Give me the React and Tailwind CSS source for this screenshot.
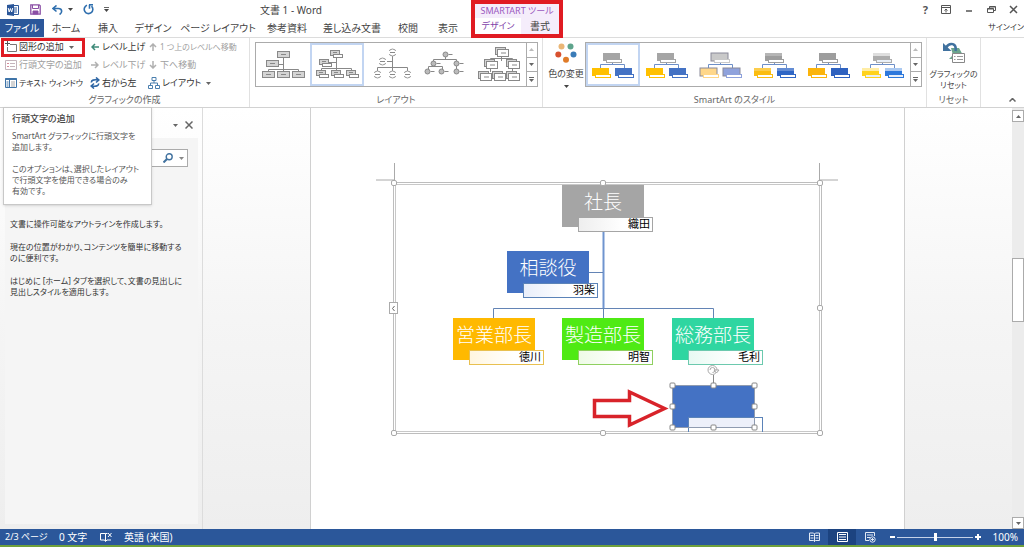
import { useState } from "react";
import clsx from "clsx";

const TABS = [
  { label: "ホーム", width: "w-[44px]" },
  { label: "挿入", width: "w-[40px]" },
  { label: "デザイン", width: "w-[50px]" },
  { label: "ページ レイアウト", width: "w-[80px]" },
  { label: "参考資料", width: "w-[58px]" },
  { label: "差し込み文書", width: "w-[72px]" },
  { label: "校閲", width: "w-[40px]" },
  { label: "表示", width: "w-[40px]" },
];

const NODES = [
  { title: "社長", name: "織田", pos: "left-[169px] top-[3px]", fill: "bg-[#a5a5a5]", line: "border-[#a5a5a5]", tint: "from-[#eeeeee]" },
  { title: "相談役", name: "羽柴", pos: "left-[114px] top-[69px]", fill: "bg-[#4472c4]", line: "border-[#5b83b8]", tint: "from-[#e9eefa]" },
  { title: "営業部長", name: "徳川", pos: "left-[60px] top-[136px]", fill: "bg-[#ffb900]", line: "border-[#e8c050]", tint: "from-[#fff6e0]" },
  { title: "製造部長", name: "明智", pos: "left-[169px] top-[136px]", fill: "bg-[#4fea14]", line: "border-[#8fd060]", tint: "from-[#eefbe6]" },
  { title: "総務部長", name: "毛利", pos: "left-[279px] top-[136px]", fill: "bg-[#2fd6a1]", line: "border-[#6cc9ae]", tint: "from-[#e8faf3]" },
];

const STYLES = [
  { top: "#a5a5a5", left: "#ffc000", right: "#4472c4" },
  { top: "#a5a5a5", left: "#ffc000", right: "#4472c4" },
  { top: "#c9c9c9", left: "#ffd78a", right: "#8fa2dc", outline: true },
  { top: "#9d9d9d", left: "#fbbd10", right: "#2f66c6", gloss: true },
  { top: "#9d9d9d", left: "#fbb40c", right: "#2f62c0" },
  { top: "#adadad", left: "#ffd21e", right: "#2d78dc", gloss: true, shine: true },
];

function Caret({ className }) {
  return (
    <svg className={clsx("h-[3px] w-[5px] shrink-0", className)} viewBox="0 0 5 3" fill="currentColor">
      <path d="M0 0h5L2.5 3z" />
    </svg>
  );
}

/* ---------- ribbon icons ---------- */

function AddShapeIcon() {
  return (
    <svg className="h-3 w-3 shrink-0" viewBox="0 0 12 12" fill="none" stroke="#777">
      <path d="M5 3.5h6.5v7h-9V6" />
      <path d="M2.5 0v5M0 2.5h5" stroke="#555" />
    </svg>
  );
}

function BulletIcon() {
  return (
    <svg className="h-3 w-3 shrink-0" viewBox="0 0 12 12" fill="none" stroke="#c4b4bc">
      <path d="M.5 1.5h11v9H.5z" />
      <path d="M2 4.5h2M2 7.5h2" stroke="#d58a9a" />
      <path d="M5 4.5h5M5 7.5h5" />
    </svg>
  );
}

function TextPaneIcon() {
  return (
    <svg className="h-3 w-3 shrink-0" viewBox="0 0 12 12" fill="none" stroke="#3f74a8">
      <path d="M.5 1.5h11v9H.5zM4.5 2v8" />
      <path d="M.5 2h11" strokeWidth="2" />
      <path d="M1.5 5h2M1.5 7h2M1.5 9h2" />
      <path d="M6 5h4M6 7h4M6 9h4" stroke="#aaa" />
    </svg>
  );
}

function Arrow({ dir, color }) {
  const paths = {
    left: "M8 4H1M4 1L1 4l3 3",
    right: "M0 4h7M4 1l3 3-3 3",
    up: "M4 8V1M1 4l3-3 3 3",
    down: "M4 0v7M1 4l3 3 3-3",
  };
  return (
    <svg className="mx-px h-2 w-2 shrink-0" viewBox="0 0 8 8" fill="none" stroke={color} strokeWidth="1.5">
      <path d={paths[dir]} />
    </svg>
  );
}

function SwapIcon() {
  return (
    <svg className="h-3 w-[10px] shrink-0" viewBox="0 0 10 12" fill="none" stroke="#2f67a5" strokeWidth="1.6">
      <path d="M1.500 5.500C1 3 4 2.500 8 3M6 .5L8.800 3 6 5.500" />
      <path d="M8.500 6.500C9 9 6 9.500 2 9M4 6.500L1.200 9 4 11.500" />
    </svg>
  );
}

function TreeIcon() {
  return (
    <svg className="h-3 w-3 shrink-0" viewBox="0 0 12 12" fill="none" stroke="#4a7fae">
      <path d="M4 .5h4v3H4zM.5 8.500h4v3h-4zM7.500 8.500h4v3h-4zM6 4v2M2.500 8V6h7v2" />
    </svg>
  );
}

function ColorDots() {
  return (
    <svg className="h-5 w-[22px]" viewBox="0 0 22 20">
      <circle cx="6.500" cy="3.500" r="3" fill="#eab676" />
      <circle cx="15.500" cy="3.500" r="3" fill="#5ea48c" />
      <circle cx="3.300" cy="11.500" r="3" fill="#d8512f" />
      <circle cx="18.500" cy="11.500" r="3" fill="#3a7cb8" />
      <circle cx="11" cy="16.800" r="3" fill="#e07b28" />
    </svg>
  );
}

function ResetIcon() {
  return (
    <svg className="h-[22px] w-6" viewBox="0 0 24 22" fill="none">
      <path d="M9 6h8l5 9v2H7l4-4z" fill="#6ba58d" />
      <path d="M10.500 11.500h12v9h-12z" fill="#fff" stroke="#888" />
      <path d="M12 14.500h1.500M12 17.500h1.500M15 14.500h6M15 17.500h6" stroke="#999" />
      <path d="M4 5.500C8-.5 15 1.500 13.500 9" stroke="#41729f" strokeWidth="2.500" />
      <path d="M1 1v8h8.500z" fill="#41729f" />
    </svg>
  );
}

/* ---------- gallery thumbnails ---------- */

function LayoutThumb({ kind }) {
  const box = { fill: "#d4d4d4", stroke: "#888" };
  return (
    <svg className="h-9 w-11" viewBox="0 0 44 36" fill="none" stroke="#888">
      {kind === 0 && (
        <>
          <path d="M22.500 10v15M16 17.500h6M7.500 27v-4.500h30V27" />
          {[[16, 4], [5, 13], [1, 24], [16, 24], [31, 24]].map(([x, y]) => (
            <g key={x + "-" + y}>
              <rect x={x + 0.5} y={y + 0.5} width="12" height="6" {...box} />
              <path d={`M${x + 4} ${y + 3.5}h5`} />
            </g>
          ))}
        </>
      )}
      {kind === 1 && (
        <>
          <path d="M21.500 9v14M14 15.500h8M6.500 25v-3.500h30V25" />
          {[[15, 3], [4, 12], [1, 23], [16, 23], [31, 23]].map(([x, y]) => (
            <g key={x + "-" + y}>
              <rect x={x + 0.5} y={y + 0.5} width="9" height="5" {...box} />
              <rect x={x + 3.5} y={y + 4.5} width="9" height="3" fill="#fff" />
              <path d={`M${x + 3} ${y + 2.5}h4`} />
            </g>
          ))}
        </>
      )}
      {kind === 2 && (
        <>
          <path d="M23.500 9v15M17 14.500h6M8.500 24v-3.500h30V24" />
          {[[23.5, 5.5], [13.5, 14.5], [8.5, 27.5], [23.5, 27.5], [38.5, 27.5]].map(([x, y]) => (
            <g key={x + "-" + y}>
              <circle cx={x} cy={y} r="3.500" fill="#fff" stroke="#999" />
              <path d={`M${x - 4.5} ${y}h9`} stroke="#fff" strokeWidth="3" />
              <path d={`M${x - 2.5} ${y}h5`} />
            </g>
          ))}
        </>
      )}
      {kind === 3 && (
        <>
          <path d="M22.500 9v4M10.500 16v-3.500h23V16M5.500 23v-3.500h14V23M33.500 18v4" />
          {[[22.5, 7.5], [10.5, 16.5], [33.5, 16.5], [4.5, 24.5], [18.5, 24.5], [33.5, 24.5]].map(([x, y]) => (
            <g key={x + "-" + y}>
              <circle cx={x} cy={y} r="2.500" fill="#bbb" />
              <path d={`M${x + 3} ${y}h4`} />
            </g>
          ))}
        </>
      )}
      {kind === 4 && (
        <>
          <path d="M24.500 9v5M13.500 14v-2.500h22V14M13.500 21v4M35.500 21v4" />
          {[[18, 0], [7, 12], [29, 12], [1, 24], [15, 24], [29, 24]].map(([x, y]) => (
            <g key={x + "-" + y}>
              <rect x={x + 0.5} y={y + 0.5} width="10" height="7" {...box} />
              <rect x={x + 2.5} y={y + 2.5} width="11" height="7" fill="#fff" />
              <path d={`M${x + 6} ${y + 6}h5`} />
            </g>
          ))}
        </>
      )}
    </svg>
  );
}

function StyleThumb({ top, left, right, outline, gloss, shine }) {
  const edge = outline ? "#8a8a9a" : "none";
  const parts = [
    { x: 12, y: 2, color: top },
    { x: 1, y: 17, color: left },
    { x: 24, y: 17, color: right },
  ];
  return (
    <svg className="h-7 w-11" viewBox="0 0 44 28">
      <path d="M21.500 11v3M9.500 17v-3.500h24v3.500" fill="none" stroke="#6d8fc8" />
      {parts.map(p => (
        <g key={p.x}>
          <rect x={p.x} y={p.y} width="17" height="8" fill={p.color} stroke={edge} />
          {gloss && <rect x={p.x} y={p.y} width="17" height="3" fill="#fff" opacity={shine ? 0.6 : 0.25} />}
          <rect x={p.x + 3.5} y={p.y + 6.5} width="15" height="3" fill={shine ? "#e8eff8" : "#fff"} stroke={p.color} />
        </g>
      ))}
    </svg>
  );
}

function Gallery({ label, count, selected, itemWidth, renderItem }) {
  return (
    <div className="flex h-[45px] border border-[#ababab] bg-white" role="group" aria-label={label}>
      {Array.from({ length: count }, (_, i) => (
        <button
          key={i}
          aria-label={`${label} ${i + 1}`}
          className={clsx(
            "flex items-center justify-center border-2",
            itemWidth,
            i === selected ? "border-[#c2d5f2]" : "border-transparent"
          )}
        >
          {renderItem(i)}
        </button>
      ))}
      <div className="flex w-[11px] flex-col divide-y divide-[#ababab] border-l border-[#ababab] text-[#666]">
        <button aria-label="上へ" className="flex flex-1 items-center justify-center text-[#bbb]">
          <Caret className="rotate-180" />
        </button>
        <button aria-label="下へ" className="flex flex-1 items-center justify-center">
          <Caret />
        </button>
        <button aria-label="その他" className="flex flex-1 flex-col items-center justify-center gap-px">
          <span className="h-px w-[5px] bg-[#666]" />
          <Caret />
        </button>
      </div>
    </div>
  );
}

function Group({ label, className, children }) {
  return (
    <section className={clsx("flex flex-col border-r border-[#e1e1e1]", className)}>
      <div className="flex h-[55px] justify-center">{children}</div>
      <p className="text-center text-[9px] leading-[14px] text-[#666]">{label}</p>
    </section>
  );
}

function RibbonButton({ icon, label, disabled, caret, highlight, compact }) {
  return (
    <button
      disabled={disabled}
      className={clsx("relative flex h-[18px] items-center gap-[2px]", disabled ? "text-[#a0a0a0]" : "text-[#333]")}
    >
      {icon}
      <span className={clsx(compact && "text-[8px]")}>{label}</span>
      {caret && <Caret className="ml-[3px] text-[#666]" />}
      {highlight && <span className="absolute -left-1 top-0 h-[19px] w-[84px] border-[3px] border-[#e01b22]" />}
    </button>
  );
}

/* ---------- window parts ---------- */

function TitleBar() {
  return (
    <header className="flex h-[38px] text-[10px] leading-4 text-[#444]">
      <div className="flex w-[471px] shrink-0 flex-col border-b border-[#dcdcdc]">
        <div className="flex h-[19px] items-center">
          <div className="flex w-[260px] items-center pl-[7px]">
            <svg className="h-3 w-3" viewBox="0 0 12 12">
              <path d="M5 1.500h6.500v9H5" fill="#fff" stroke="#2b579a" />
              <path d="M7 4h3M7 6h3M7 8h3" stroke="#2b579a" />
              <path d="M0 1l7-1v12l-7-1z" fill="#2b579a" />
              <path d="M1.200 4l1 4 1.200-3.500L4.700 8l1-4" fill="none" stroke="#fff" />
            </svg>
            <svg className="ml-[11px] h-[11px] w-[11px]" viewBox="0 0 11 11" fill="none" stroke="#8a4fa5">
              <path d="M.8.8h8.400l1 1v8.400H.8z" strokeWidth="1.300" />
              <path d="M2.500 1v3.500h6V1" />
              <path d="M3 7h5v3H3z" fill="#8a4fa5" />
            </svg>
            <svg className="ml-[11px] h-[10px] w-[11px]" viewBox="0 0 11 10" fill="none" stroke="#2f6fae" strokeWidth="1.600">
              <path d="M4.500.5L1 3.500l3.500 3M1 3.500h5.500c4 0 4 4.500 1 6" />
            </svg>
            <Caret className="ml-[5px]" />
            <svg className="ml-[10px] h-[11px] w-[11px]" viewBox="0 0 11 11" fill="none" stroke="#2f6fae" strokeWidth="1.600">
              <path d="M4 1.300A4.300 4.300 0 1 0 8.500 2.200M6 .800h4M6.500.8v4" />
            </svg>
            <span className="ml-[10px] flex flex-col items-center gap-px">
              <span className="h-px w-[5px] bg-[#666]" />
              <Caret />
            </span>
          </div>
          <h1>文書 1 - Word</h1>
        </div>
        <nav className="flex h-[18px] items-center whitespace-nowrap">
          <button className="h-[18px] w-[44px] bg-[#2b579a] text-white">ファイル</button>
          {TABS.map(t => (
            <button key={t.label} className={clsx("text-center", t.width)}>
              {t.label}
            </button>
          ))}
        </nav>
      </div>

      <div className="flex w-[92px] shrink-0 flex-col whitespace-nowrap border-4 border-[#e01b22] bg-[#f5edfb]">
        <p className="text-center text-[9px] leading-[14px] text-[#9b59c0]">SMARTART ツール</p>
        <div className="flex h-[16px]">
          <button className="w-[46px] bg-white text-[9px] text-[#8040a8]">デザイン</button>
          <button className="flex-1">書式</button>
        </div>
      </div>

      <div className="flex min-w-0 flex-1 flex-col items-end border-b border-[#dcdcdc]">
        <div className="flex h-[19px] items-center gap-[13px] pr-[6px] text-[#555]">
          <button aria-label="ヘルプ" className="text-[11px] font-bold">?</button>
          <button aria-label="リボンの表示オプション">
            <svg className="h-[9px] w-[10px]" viewBox="0 0 10 9" fill="none" stroke="currentColor">
              <path d="M.5.5h9v8h-9zM.5 2.500h9M5 7.500V4M3.500 5.500L5 4l1.500 1.500" />
            </svg>
          </button>
          <button aria-label="最小化">
            <svg className="h-[9px] w-[10px]" viewBox="0 0 10 9" stroke="currentColor" strokeWidth="1.500"><path d="M2 6h6" /></svg>
          </button>
          <button aria-label="元に戻す">
            <svg className="h-[9px] w-[9px]" viewBox="0 0 9 9" fill="none" stroke="currentColor">
              <path d="M.5 3.500h6v4h-6zM2.500 3.500v-2h6v4h-2M2.500 2h6M.5 4h6" />
            </svg>
          </button>
          <button aria-label="閉じる">
            <svg className="h-[9px] w-[9px]" viewBox="0 0 9 9" stroke="currentColor" strokeWidth="1.500"><path d="M1 1l7 7M8 1L1 8" /></svg>
          </button>
        </div>
        <a href="#signin" className="text-[8px] text-[#333]">サインイン</a>
      </div>
    </header>
  );
}

function Ribbon() {
  return (
    <div className="flex h-[70px] border-b border-[#d2d2d2] whitespace-nowrap">
      <Group label="グラフィックの作成" className="w-[250px] shrink-0">
        <div className="flex w-full pl-[5px] text-[9px] leading-3">
          <div className="w-[83px]">
            <RibbonButton icon={<AddShapeIcon />} label="図形の追加" caret highlight />
            <RibbonButton icon={<BulletIcon />} label="行頭文字の追加" disabled />
            <RibbonButton icon={<TextPaneIcon />} label="テキスト ウィンドウ" compact />
          </div>
          <div className="w-[60px] pl-[2px]">
            <RibbonButton icon={<Arrow dir="left" color="#3d8a78" />} label="レベル上げ" />
            <RibbonButton icon={<Arrow dir="right" color="#b0b0b0" />} label="レベル下げ" disabled />
            <RibbonButton icon={<SwapIcon />} label="右から左" />
          </div>
          <div>
            <RibbonButton icon={<Arrow dir="up" color="#b0b0b0" />} label="1 つ上のレベルへ移動" disabled compact />
            <RibbonButton icon={<Arrow dir="down" color="#b0b0b0" />} label="下へ移動" disabled />
            <RibbonButton icon={<TreeIcon />} label="レイアウト" caret />
          </div>
        </div>
      </Group>

      <Group label="レイアウト" className="w-[293px] shrink-0">
        <div className="pt-1">
          <Gallery
            label="レイアウト"
            count={5}
            selected={1}
            itemWidth="w-[54px]"
            renderItem={i => <LayoutThumb kind={i} />}
          />
        </div>
      </Group>

      <Group label="SmartArt のスタイル" className="w-[384px] shrink-0">
        <button className="flex w-[37px] flex-col items-center pt-[5px] text-[9px] leading-[14px] text-[#444]">
          <ColorDots />
          <span className="mt-1">色の変更</span>
          <Caret className="mt-1" />
        </button>
        <div className="pt-1">
          <Gallery
            label="スタイル"
            count={6}
            selected={0}
            itemWidth="w-[54px]"
            renderItem={i => <StyleThumb {...STYLES[i]} />}
          />
        </div>
      </Group>

      <Group label="リセット" className="w-[54px] shrink-0">
        <button className="flex flex-col items-center pt-1 text-[8px] leading-[11px] text-[#444]">
          <ResetIcon />
          <span className="mt-1">グラフィックの</span>
          <span>リセット</span>
        </button>
      </Group>

      <button aria-label="リボンを折りたたむ" className="mt-auto mr-2 mb-[5px] ml-auto">
        <svg className="h-1 w-[7px]" viewBox="0 0 7 4" fill="none" stroke="#666" strokeWidth="1.500"><path d="M.5 3.500l3-3 3 3" /></svg>
      </button>
    </div>
  );
}

function NavigationPane() {
  const [query, setQuery] = useState("");

  return (
    <aside className="relative w-[203px] shrink-0 border-r border-[#dcdcdc] whitespace-nowrap">
      <div className="flex h-[30px] items-center justify-end gap-[6px] pt-1 pr-[9px] text-[#666]">
        <button aria-label="作業ウィンドウのオプション"><Caret className="w-[7px]" /></button>
        <button aria-label="閉じる">
          <svg className="h-2 w-2" viewBox="0 0 8 8" stroke="currentColor" strokeWidth="1.500"><path d="M.5.5l7 7M7.500.5l-7 7" /></svg>
        </button>
      </div>

      <div className="mr-1 ml-[5px] h-[386px] bg-[#f5f5f5] px-[5px] pt-[11px]">
        <div className="flex h-[18px] w-[178px] items-center gap-[6px] border border-[#ababab] bg-white pr-[3px]">
          <input
            aria-label="文書の検索"
            value={query}
            onChange={e => setQuery(e.target.value)}
            className="h-4 min-w-0 flex-1 px-1 text-[9px] outline-none"
          />
          <svg className="h-[10px] w-[10px]" viewBox="0 0 10 10" fill="none" stroke="#41729f" strokeWidth="1.400">
            <circle cx="6.200" cy="3.800" r="3" />
            <path d="M4 6L.5 9.500" strokeWidth="2" />
          </svg>
          <Caret className="text-[#888]" />
        </div>

        <div className="space-y-3 pt-[51px] text-[8px] leading-[11px] text-[#333]">
          <p>文書に操作可能なアウトラインを作成します。</p>
          <p>現在の位置がわかり、コンテンツを簡単に移動する<br />のに便利です。</p>
          <p>はじめに [ホーム] タブを選択して、文書の見出しに<br />見出しスタイルを適用します。</p>
        </div>
      </div>

      <div role="tooltip" className="absolute -top-px left-[3px] h-[98px] w-[149px] border border-[#c8c8c8] bg-white pt-1 pl-2 text-[8px] leading-[11px] text-[#555] shadow-sm">
        <p className="pb-1 text-[9px] leading-[14px] font-medium text-[#444]">行頭文字の追加</p>
        <p>SmartArt グラフィックに行頭文字を<br />追加します。</p>
        <p className="pt-[11px]">このオプションは、選択したレイアウト<br />で行頭文字を使用できる場合のみ<br />有効です。</p>
      </div>
    </aside>
  );
}

function OrgNode({ title, name, pos, fill, line, tint }) {
  return (
    <div className={clsx("absolute h-[42px] w-[82px] text-center text-[19px] leading-[34px] font-light text-white", pos, fill)}>
      {title}
      <div className={clsx("absolute top-8 left-4 h-[15px] w-[75px] border bg-white bg-linear-to-r to-60% to-white pr-[2px] text-right text-[11px] leading-3 font-normal text-black", line, tint)}>
        {name}
      </div>
    </div>
  );
}

function SmartArt() {
  const corner = [[1, 1], [210, 1], [427, 1], [427, 126], [1, 251], [210, 251], [427, 251]];
  const grips = [[279, 203], [320, 203], [361, 203], [279, 224], [361, 224], [279, 245], [320, 245], [361, 245]];

  return (
    <div className="relative mx-auto mt-[74px] h-[253px] w-[429px]">
      {/* connectors, crop marks and canvas frame */}
      <svg className="absolute inset-0 h-full w-full overflow-visible" viewBox="0 0 429 253" fill="none">
        <path d="M1.500-19V-2H-17M426.500-19V-2H445" stroke="#aaa" />
        <rect x=".5" y=".5" width="428" height="251" stroke="#bdbdbd" />
        <rect x="2.500" y="2.500" width="424" height="247" stroke="#c8c8c8" />
        <path d="M210.500 48v78" stroke="#6f94cf" strokeWidth="2" />
        <path d="M196 90.500h14M210.500 126v10M100.500 136v-9.500h220v9.500" stroke="#6384b5" />
      </svg>

      {NODES.map(n => (
        <OrgNode key={n.title} {...n} />
      ))}

      {/* shape that has just been added */}
      <div className="absolute top-[203px] left-[279px] h-[42px] w-[82px] bg-[#4472c4]">
        <div className="absolute top-8 left-4 h-[15px] w-[75px] border border-b-0 border-[#5b83b8]">
          <div className="h-[10px] w-[66px] bg-[#edf0fa]" />
        </div>
      </div>

      {/* handles */}
      <svg className="absolute inset-0 h-full w-full overflow-visible" viewBox="0 0 429 253" fill="#fff" stroke="#a9a9a9">
        {corner.map(([x, y]) => (
          <rect key={x + "-" + y} x={x - 2.5} y={y - 2.5} width="5" height="5" rx="1.500" />
        ))}
        <rect x="279.500" y="203.500" width="82" height="42" fill="none" stroke="#8f9bb0" />
        <path d="M320.500 193v10" stroke="#888" />
        <circle cx="319.500" cy="188" r="4.500" />
        <path d="M317 188a2.500 2.500 0 1 1 2.500 2.500M321 188h5l-2.500 3z" />
        {grips.map(([x, y]) => (
          <rect key={x + "-" + y} x={x - 2} y={y - 2} width="5" height="5" rx="1" stroke="#888" />
        ))}
        <path
          d="M201.500 218.500h35v-8.500l35 16.500-35 16.500v-8.500h-35z"
          stroke="#d8232a"
          strokeWidth="3.500"
        />
      </svg>

      <button aria-label="テキスト ウィンドウを開く" className="absolute top-[120px] -left-1 flex h-3 w-[9px] items-center justify-center border border-[#ababab] bg-white">
        <svg className="h-[5px] w-[3px]" viewBox="0 0 3 5" fill="none" stroke="#666"><path d="M2.500 0L.5 2.500l2 2.500" /></svg>
      </button>
    </div>
  );
}

function ScrollBar() {
  return (
    <div className="flex w-3 shrink-0 flex-col bg-[#ececec] pt-[2px] text-[#666]">
      <button aria-label="上にスクロール" className="flex h-3 items-center justify-center border border-[#ababab] bg-white">
        <Caret className="rotate-180" />
      </button>
      <div className="mt-[136px] h-16 border border-[#ababab] bg-white" />
      <button aria-label="下にスクロール" className="mt-auto flex h-3 items-center justify-center border border-[#ababab] bg-white">
        <Caret />
      </button>
    </div>
  );
}

function StatusBar() {
  const [zoom, setZoom] = useState(100);

  return (
    <footer className="flex h-[18px] items-center border-b-2 border-[#6fa03c] bg-[#2b579a] pr-[6px] pl-[5px] text-[10px] leading-4 whitespace-nowrap text-white">
      <span className="w-[54px] text-[9px]">2/3 ページ</span>
      <span className="w-[41px]">0 文字</span>
      <svg className="mr-3 h-[10px] w-3" viewBox="0 0 12 10" fill="none" stroke="#fff">
        <path d="M5.500 9V1.500H.5V8h4l1 1.500L7 8h4M5.500 1.500h2M8 1l3.500 4M11.500 1L8 5" />
      </svg>
      <span>英語 (米国)</span>

      <div className="ml-auto flex items-center">
        <button aria-label="閲覧モード" className="flex h-4 w-7 items-center justify-center">
          <svg className="h-[10px] w-[11px]" viewBox="0 0 11 10" fill="none" stroke="#e3eaf5">
            <path d="M5.500 2v7.500M.5 1h4l1 1 1-1h4v7.500h-4l-1 1-1-1h-4zM1.500 3.500h3M1.500 6h3M6.500 3.500h3M6.500 6h3" />
          </svg>
        </button>
        <button aria-label="印刷レイアウト" className="flex h-4 w-7 items-center justify-center bg-[#1c4380]">
          <svg className="h-[10px] w-[11px]" viewBox="0 0 11 10" fill="none" stroke="#fff">
            <path d="M.5.5h10v9H.5zM2 2.500h7M2 5h7M2 7.500h7" />
          </svg>
        </button>
        <button aria-label="Web レイアウト" className="flex h-4 w-7 items-center justify-center">
          <svg className="h-[11px] w-[11px]" viewBox="0 0 11 11" fill="none" stroke="#e3eaf5">
            <path d="M4 8.500H.5v-8h9V4M2 3h6M2 5.500h3" />
            <circle cx="7.500" cy="7.500" r="2.700" fill="#2b579a" />
            <path d="M6 7.500h3M7.500 6v3" />
          </svg>
        </button>
        <button aria-label="縮小" className="ml-1 flex h-4 w-2 items-center justify-center" onClick={() => setZoom(z => Math.max(10, z - 10))}>
          <span className="h-[2px] w-[5px] bg-white" />
        </button>
        <input
          type="range"
          aria-label="ズーム"
          min="10"
          max="190"
          value={zoom}
          onChange={e => setZoom(Number(e.target.value))}
          className="mx-px h-px w-[76px] appearance-none bg-[#c5d2e8] [&::-webkit-slider-thumb]:h-2 [&::-webkit-slider-thumb]:w-[3px] [&::-webkit-slider-thumb]:appearance-none [&::-webkit-slider-thumb]:bg-white"
        />
        <button aria-label="拡大" className="flex h-4 w-2 items-center justify-center" onClick={() => setZoom(z => Math.min(190, z + 10))}>
          <svg className="h-[6px] w-[6px]" viewBox="0 0 6 6" stroke="#fff" strokeWidth="2"><path d="M0 3h6M3 0v6" /></svg>
        </button>
        <span className="w-9 text-right">{zoom}%</span>
      </div>
    </footer>
  );
}

export default function App() {
  return (
    <div className="flex min-h-screen flex-col bg-white font-['Noto_Sans','Noto_Sans_CJK_JP',sans-serif] [font-feature-settings:'palt']">
      <TitleBar />
      <Ribbon />
      <main className="flex flex-1 bg-linear-to-b from-white via-[#f5f5f5] to-[#eeeeee]">
        <NavigationPane />
        <div className="min-w-0 flex-1">
          <article className="mx-auto flex h-full w-[595px] flex-col border-x border-[#d0d0d0] bg-white">
            <SmartArt />
          </article>
        </div>
        <ScrollBar />
      </main>
      <StatusBar />
    </div>
  );
}
